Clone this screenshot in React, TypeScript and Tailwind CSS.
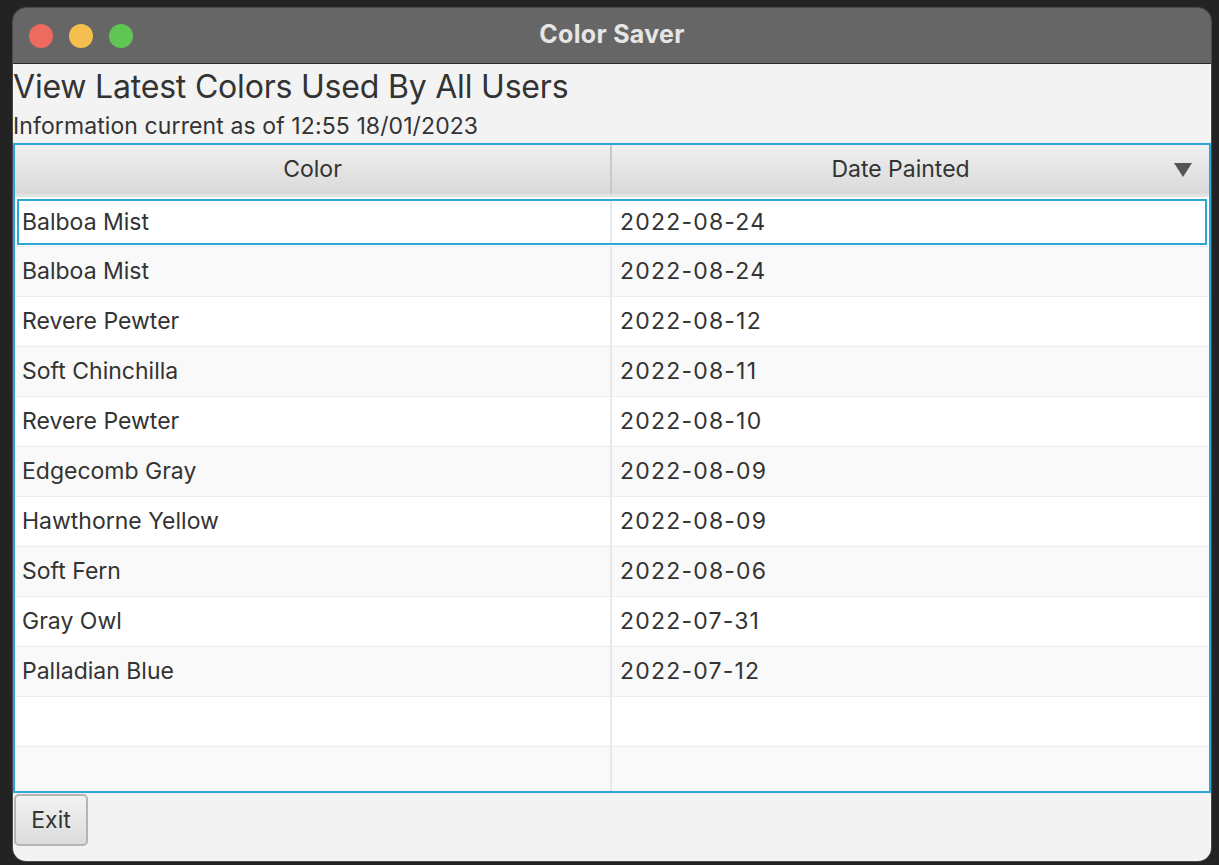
import React from 'react';

const rows: [string, string][] = [
    ['Balboa Mist', '2022-08-24'],
    ['Balboa Mist', '2022-08-24'],
    ['Revere Pewter', '2022-08-12'],
    ['Soft Chinchilla', '2022-08-11'],
    ['Revere Pewter', '2022-08-10'],
    ['Edgecomb Gray', '2022-08-09'],
    ['Hawthorne Yellow', '2022-08-09'],
    ['Soft Fern', '2022-08-06'],
    ['Gray Owl', '2022-07-31'],
    ['Palladian Blue', '2022-07-12'],
    ['', ''],
    ['', ''],
];

const font = { fontFamily: 'Inter, "Noto Sans", sans-serif' };

const App: React.FC = () => {
    return (
        <div className="w-[1219px] h-[865px] bg-[#232323] pt-[7px] pl-[12px]" style={font}>
            <div className="w-[1200px] h-[855px] flex flex-col rounded-[14px] overflow-hidden border border-[#4a4a4a]">
                {/* Title bar */}
                <div className="h-[56px] shrink-0 bg-[#666666] border-b border-[#2a2a2a] flex items-center relative">
                    <div className="flex items-center gap-[16px] pl-[16px]">
                        <span className="w-[24px] h-[24px] rounded-full bg-[#ed6a5e]" />
                        <span className="w-[24px] h-[24px] rounded-full bg-[#f4bf4f]" />
                        <span className="w-[24px] h-[24px] rounded-full bg-[#61c554]" />
                    </div>
                    <div className="absolute inset-0 flex items-center justify-center pb-[2px] text-[25px] font-bold text-[#e6e6e6] tracking-[0.3px]">
                        Color Saver
                    </div>
                </div>

                {/* Content */}
                <div className="flex-1 flex flex-col bg-[#f3f3f3] text-[#333333]">
                    <div className="pt-[4px] text-[32px] leading-[38px] tracking-[-0.2px]">
                        View Latest Colors Used By All Users
                    </div>
                    <div className="mt-[4px] text-[23px] leading-[32px] tracking-[0.1px]">
                        Information current as of 12:55 18/01/2023
                    </div>

                    {/* Table */}
                    <div className="mt-[1px] h-[650px] shrink-0 border-2 border-[#2ba6d6] bg-[#f9f9f9] flex flex-col overflow-hidden">
                        <div className="h-[52px] shrink-0 flex bg-gradient-to-b from-[#f0f0f0] to-[#d9d9d9] border-b-[3px] border-[#e4e4e4] text-[23px]">
                            <div className="w-[597px] flex items-center justify-center border-r-2 border-[#c9c9c9]">
                                Color
                            </div>
                            <div className="flex-1 flex items-center justify-center pr-[20px] relative">
                                Date Painted
                                <svg className="absolute right-[17px] top-[18px]" width="18" height="14" viewBox="0 0 18 14">
                                    <path d="M0 0 L18 0 L9 14 Z" fill="#555555" />
                                </svg>
                            </div>
                        </div>
                        {rows.map(([name, date], i) => (
                            <div
                                key={i}
                                className={
                                    'h-[50px] shrink-0 flex text-[23px] border-b border-[#ececec] ' +
                                    (i % 2 === 0 ? 'bg-white' : 'bg-[#f9f9f9]')
                                }
                            >
                                {i === 0 ? (
                                    <div className="flex-1 flex m-[2px] mb-[1px] border-2 border-[#2ba6d6]">
                                        <div className="w-[593px] flex items-center pl-[3px] border-r-2 border-[#e8e8e8]">{name}</div>
                                        <div className="flex-1 flex items-center pl-[8px] tracking-[1.2px]">{date}</div>
                                    </div>
                                ) : (
                                    <>
                                        <div className="w-[597px] flex items-center pl-[7px] border-r-2 border-[#e8e8e8]">{name}</div>
                                        <div className="flex-1 flex items-center pl-[8px] tracking-[1.2px]">{date}</div>
                                    </>
                                )}
                            </div>
                        ))}
                    </div>

                    {/* Footer */}
                    <div className="pl-[1px] pt-[1px]">
                        <button className="w-[74px] h-[52px] rounded-[5px] border-2 border-[#b4b4b4] bg-gradient-to-b from-[#f2f2f2] to-[#dcdcdc] text-[23px] text-[#333333]">
                            Exit
                        </button>
                    </div>
                </div>
            </div>
        </div>
    );
};

export default App;
